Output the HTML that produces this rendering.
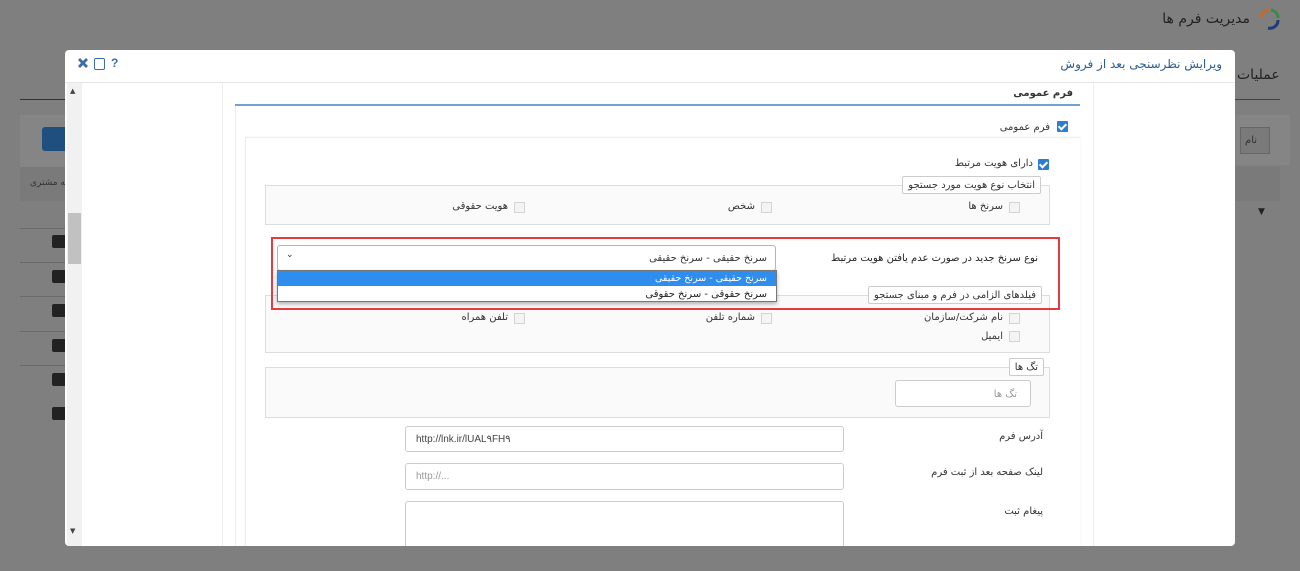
<!DOCTYPE html>
<html><head><meta charset="utf-8">
<style>
*{box-sizing:border-box;margin:0;padding:0}
body{width:1300px;height:571px;overflow:hidden;background:#7f7f7f;position:relative;font-family:"DejaVu Sans","Liberation Sans",sans-serif;font-size:10px;color:#333}
.a{position:absolute}
.r{position:absolute;white-space:nowrap;direction:rtl;margin-top:3px}
.cb{position:absolute;width:11px;height:11px;border:1px solid #d4d4d4;background:#f4f4f4}
.cbc{position:absolute;width:11px;height:11px;background:#2e7dd1;border-radius:1px}
.cbc:after{content:"";position:absolute;left:3px;top:1px;width:3px;height:6px;border:solid #fff;border-width:0 2px 2px 0;transform:rotate(45deg)}
.fs{position:absolute;background:#fafafa;border:1px solid #ddd}
.lg{position:absolute;background:#fff;border:1px solid #ccc;border-radius:2px;direction:rtl;font-size:10px;padding:3px 5px 2px;white-space:nowrap}
.inp{position:absolute;background:#fff;border:1px solid #ccc;border-radius:3px}
</style></head><body>
<div class="r" style="right:50px;top:8px;font-size:14px;color:#222">مدیریت فرم ها</div>
<svg class="a" style="left:1256px;top:6px" width="26" height="26" viewBox="0 0 26 26"><path d="M5 12 A8 8 0 0 1 13 4" stroke="#c8682a" stroke-width="3" fill="none"/><path d="M15 4 A8 8 0 0 1 22 12" stroke="#3b8a4a" stroke-width="3" fill="none"/><path d="M22 14 A8 8 0 0 1 12 22" stroke="#1d3c78" stroke-width="3" fill="none"/></svg>
<div class="r" style="left:1237px;top:64px;font-size:14px;color:#222">عملیات</div>
<div class="a" style="left:20px;top:99px;width:45px;height:1px;background:#333"></div>
<div class="a" style="left:1235px;top:99px;width:45px;height:1px;background:#1e4a70"></div>
<div class="a" style="left:20px;top:115px;width:45px;height:60px;background:#858585"></div>
<div class="a" style="left:42px;top:127px;width:23px;height:24px;background:#1e4f7e;border-radius:3px 0 0 3px"></div>
<div class="a" style="left:20px;top:167px;width:45px;height:34px;background:#7a7a7a"></div>
<div class="r" style="left:30px;top:175px;font-size:9px;color:#333">به مشتری</div>
<div class="a" style="left:1235px;top:115px;width:55px;height:50px;background:#858585"></div>
<div class="a" style="left:1240px;top:127px;width:30px;height:27px;background:#7a7a7a;border:1px solid #666"></div>
<div class="r" style="left:1245px;top:132px;font-size:10px;color:#333">نام</div>
<div class="a" style="left:1235px;top:167px;width:45px;height:34px;background:#7a7a7a"></div>
<div class="a" style="left:1258px;top:207px;font-size:9px;color:#222">▼</div>
<div class="a" style="left:20px;top:228px;width:45px;height:1px;background:#6a6a6a"></div>
<div class="a" style="left:20px;top:262px;width:45px;height:1px;background:#6a6a6a"></div>
<div class="a" style="left:20px;top:296px;width:45px;height:1px;background:#6a6a6a"></div>
<div class="a" style="left:20px;top:331px;width:45px;height:1px;background:#6a6a6a"></div>
<div class="a" style="left:20px;top:365px;width:45px;height:1px;background:#6a6a6a"></div>
<div class="a" style="left:52px;top:235px;width:14px;height:13px;background:#222;border-radius:2px"></div>
<div class="a" style="left:52px;top:270px;width:14px;height:13px;background:#222;border-radius:2px"></div>
<div class="a" style="left:52px;top:304px;width:14px;height:13px;background:#222;border-radius:2px"></div>
<div class="a" style="left:52px;top:339px;width:14px;height:13px;background:#222;border-radius:2px"></div>
<div class="a" style="left:52px;top:373px;width:14px;height:13px;background:#222;border-radius:2px"></div>
<div class="a" style="left:52px;top:407px;width:14px;height:13px;background:#222;border-radius:2px"></div>

<div class="a" style="left:65px;top:50px;width:1170px;height:496px;background:#fff;border-radius:4px;overflow:hidden">
 <div class="a" style="left:0;top:32px;width:1170px;height:1px;background:#e6e6e6"></div>
 <div class="r" style="right:13px;top:4px;font-size:12px;color:#2b5d93">ویرایش نظرسنجی بعد از فروش</div>
 <svg class="a" style="left:12px;top:7px" width="12" height="12" viewBox="0 0 12 12"><path d="M2 2L10 10M10 2L2 10" stroke="#3a6ea8" stroke-width="2.8"/></svg>
 <div class="a" style="left:29px;top:8px;width:11px;height:12px;border:1.5px solid #3a6ea8;border-radius:2px"></div>
 <div class="a" style="left:46px;top:6px;font-size:12px;font-weight:bold;color:#3a6ea8;font-family:'Liberation Sans',sans-serif">?</div>
 <div class="a" style="left:2px;top:33px;width:15px;height:463px;background:#f1f1f1"></div>
 <div class="a" style="left:3px;top:163px;width:13px;height:51px;background:#c1c1c1"></div>
 <div class="a" style="left:5px;top:37px;font-size:7px;color:#444">▲</div>
 <div class="a" style="left:5px;top:477px;font-size:7px;color:#444">▼</div>
 <div class="a" style="left:157px;top:33px;width:1px;height:463px;background:#ececec"></div>
 <div class="a" style="left:1028px;top:33px;width:1px;height:463px;background:#ececec"></div>
</div>
<div class="r" style="right:227px;top:85px;font-size:10px;font-weight:bold;color:#333">فرم عمومی</div>
<div class="a" style="left:235px;top:104px;width:845px;height:2px;background:#6fa3d4"></div>
<div class="a" style="left:235px;top:106px;width:1px;height:440px;background:#eee"></div>
<div class="cbc" style="left:1057px;top:121px"></div>
<div class="r" style="right:250px;top:119px">فرم عمومی</div>
<div class="a" style="left:245px;top:137px;width:835px;height:420px;border-top:1px solid #eee;border-left:1px solid #eee;box-shadow:0 0 3px rgba(0,0,0,.05)"></div>
<div class="cbc" style="left:1038px;top:159px"></div>
<div class="r" style="right:267px;top:155px">دارای هویت مرتبط</div>

<div class="fs" style="left:265px;top:185px;width:785px;height:40px"></div>
<div class="lg" style="right:259px;top:176px">انتخاب نوع هویت مورد جستجو</div>
<div class="cb" style="left:1009px;top:202px"></div><div class="r" style="right:297px;top:198px">سرنخ ها</div>
<div class="cb" style="left:761px;top:202px"></div><div class="r" style="right:545px;top:198px">شخص</div>
<div class="cb" style="left:514px;top:202px"></div><div class="r" style="right:792px;top:198px">هویت حقوقی</div>

<div class="r" style="right:262px;top:250px;color:#222">نوع سرنخ جدید در صورت عدم یافتن هویت مرتبط</div>
<div class="inp" style="left:277px;top:245px;width:499px;height:26px;border-color:#9db8d8"></div>
<div class="r" style="right:533px;top:250px">سرنخ حقیقی - سرنخ حقیقی</div>
<div class="a" style="left:286px;top:250px;font-size:9px;color:#333">⌄</div>

<div class="fs" style="left:265px;top:295px;width:785px;height:58px"></div>
<div class="lg" style="right:258px;top:286px">فیلدهای الزامی در فرم و مبنای جستجو</div>
<div class="cb" style="left:1009px;top:313px"></div><div class="r" style="right:297px;top:309px">نام شرکت/سازمان</div>
<div class="cb" style="left:761px;top:313px"></div><div class="r" style="right:545px;top:309px">شماره تلفن</div>
<div class="cb" style="left:514px;top:313px"></div><div class="r" style="right:792px;top:309px">تلفن همراه</div>
<div class="cb" style="left:1009px;top:331px"></div><div class="r" style="right:297px;top:328px">ایمیل</div>

<div class="a" style="left:277px;top:270px;width:500px;height:32px;background:#fff;border:1px solid #777;box-shadow:0 2px 4px rgba(0,0,0,.3)"></div>
<div class="a" style="left:278px;top:271px;width:498px;height:15px;background:#2f8ded"></div>
<div class="r" style="right:533px;top:270px;color:#fff;font-size:9.5px">سرنخ حقیقی - سرنخ حقیقی</div>
<div class="r" style="right:533px;top:286px;color:#222">سرنخ حقوقی - سرنخ حقوقی</div>
<div class="a" style="left:271px;top:237px;width:789px;height:73px;border:2px solid #e53a3f"></div>

<div class="fs" style="left:265px;top:367px;width:785px;height:51px"></div>
<div class="lg" style="right:256px;top:358px">تگ ها</div>
<div class="inp" style="left:895px;top:380px;width:136px;height:27px"></div>
<div class="r" style="right:283px;top:386px;color:#999">تگ ها</div>

<div class="r" style="right:257px;top:428px">آدرس فرم</div>
<div class="inp" style="left:405px;top:426px;width:439px;height:26px"></div>
<div class="a" style="left:416px;top:434px;font-size:10px;color:#444;font-family:'Liberation Sans',sans-serif">http://lnk.ir/lUAL۹FH۹</div>
<div class="r" style="right:257px;top:464px">لینک صفحه بعد از ثبت فرم</div>
<div class="inp" style="left:405px;top:463px;width:439px;height:27px"></div>
<div class="a" style="left:416px;top:471px;font-size:10px;color:#999;font-family:'Liberation Sans',sans-serif">http://...</div>
<div class="r" style="right:257px;top:503px">پیغام ثبت</div>
<div class="inp" style="left:405px;top:501px;width:439px;height:50px"></div>
<div class="a" style="left:65px;top:546px;width:1170px;height:25px;background:#7f7f7f"></div>
</body></html>
